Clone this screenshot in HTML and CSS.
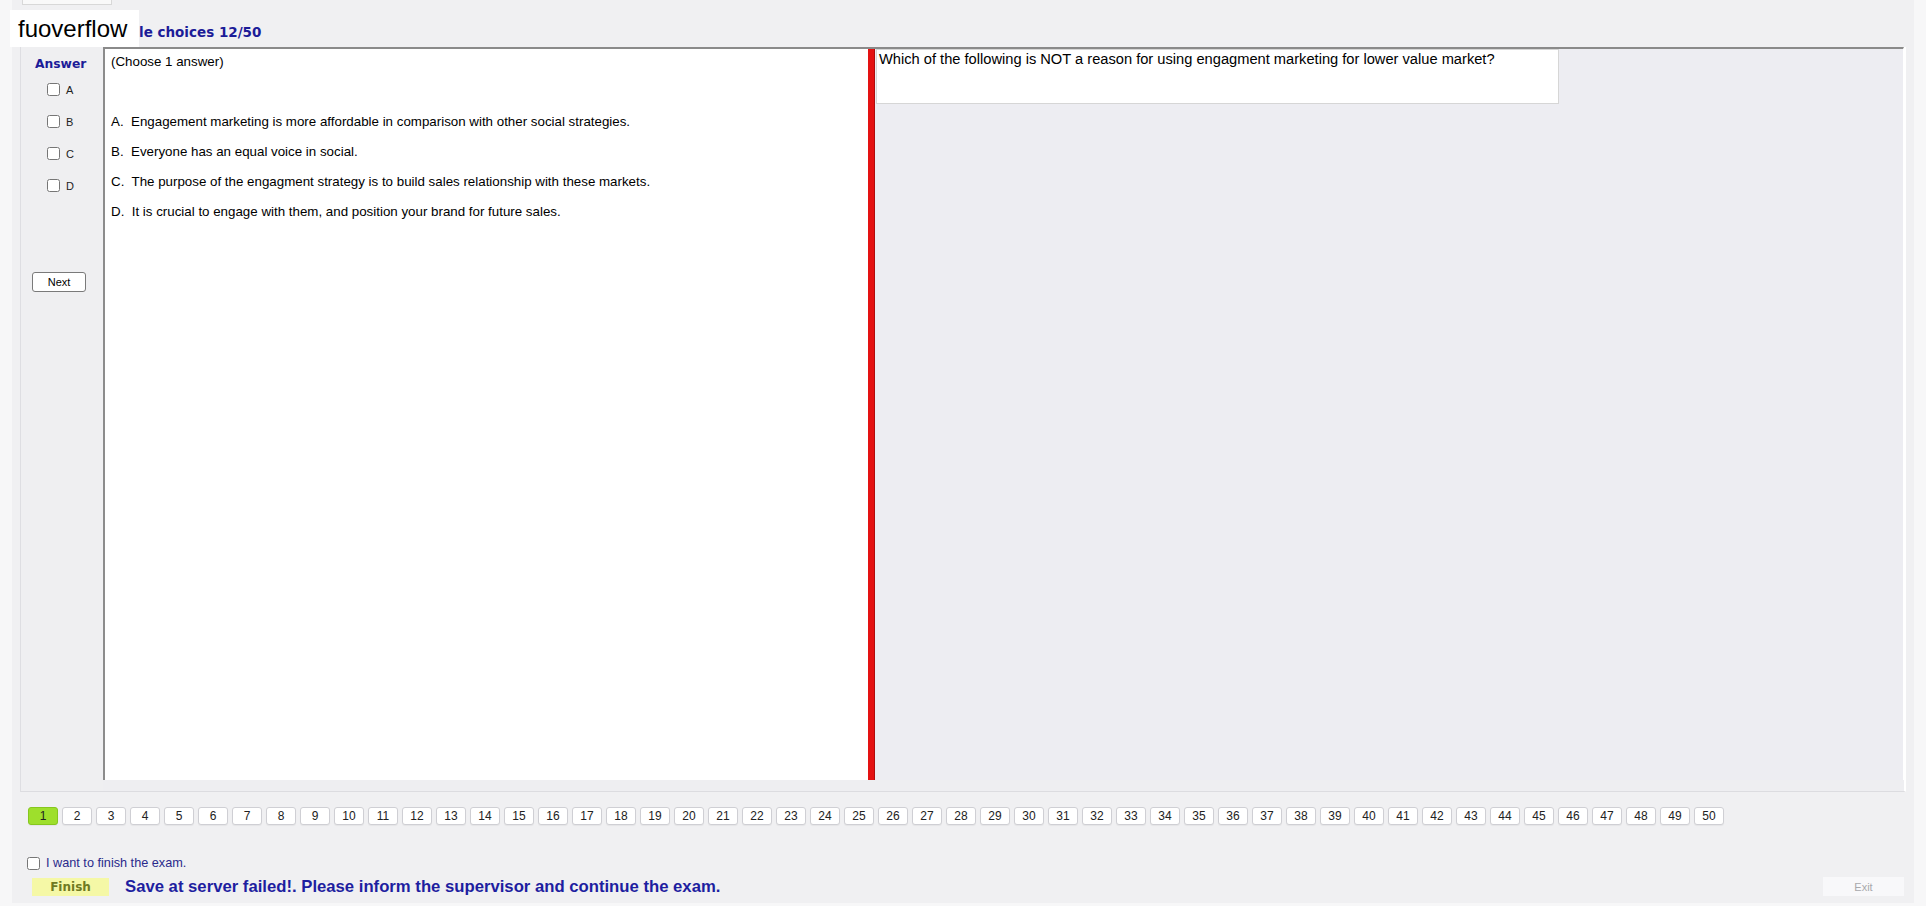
FILE: index.html
```html
<!DOCTYPE html>
<html>
<head>
    <title>Exam Client</title>
    <link rel="stylesheet" href="styles.css">
</head>
<body>
    <div class="window">
        <div class="tabs"><span class="tab"></span></div>
        <div class="title">le choices 12/50</div>

        <div class="group">
            <div class="answer-col">
                <div class="answer-label">Answer</div>
                <label class="opt"><input type="checkbox"> A</label>
                <label class="opt"><input type="checkbox"> B</label>
                <label class="opt"><input type="checkbox"> C</label>
                <label class="opt"><input type="checkbox"> D</label>
                <button class="next-btn">Next</button>
            </div>
            <div class="work">
                <div class="panes">
                    <div class="choices">
                        <p>(Choose 1 answer)</p>
                        <p>&nbsp;</p>
                        <p>A.&nbsp; Engagement marketing is more affordable in comparison with other social strategies.</p>
                        <p>B.&nbsp; Everyone has an equal voice in social.</p>
                        <p>C.&nbsp; The purpose of the engagment strategy is to build sales relationship with these markets.</p>
                        <p>D.&nbsp; It is crucial to engage with them, and position your brand for future sales.</p>
                    </div>
                    <div class="splitter"></div>
                    <div class="qpane">
                        <div class="question">Which of the following is NOT a reason for using engagment marketing for lower value market?</div>
                    </div>
                </div>
            </div>
        </div>

        <div class="pager" id="pager"></div>

        <label class="finish-check"><input type="checkbox"> I want to finish the exam.</label>
        <div class="finish-row">
            <button class="finish-btn">Finish</button>
            <span class="status">Save at server failed!. Please inform the supervisor and continue the exam.</span>
            <button class="exit-btn">Exit</button>
        </div>
    </div>

    <div class="watermark">fuoverflow</div>

    <script>
        // question number buttons
        const pager = document.getElementById("pager");
        for (let i = 1; i <= 50; i++) {
            const b = document.createElement("button");
            b.className = (i === 1) ? "qbtn current" : "qbtn";
            b.textContent = i;
            pager.appendChild(b);
        }
    </script>
</body>
</html>
```

FILE: styles.css
```css
body {
    margin: 0;
    padding: 0;
    background-color: #f7f7f8;
    font-family: "Liberation Sans", Arial, sans-serif;
    font-size: 12px;
    color: #000;
}

.window {
    margin-left: 12px;
    width: 1902px;
    height: 903px;
    padding-left: 8px;
    box-sizing: border-box;
    background-color: #f0f0f2;
}

.tabs {
    height: 5px;
}

.tab {
    display: block;
    margin-left: 2px;
    width: 88px;
    height: 4px;
    background-color: #f9f9f9;
    border: 1px solid #d8d8d8;
    border-top: none;
}

.title {
    height: 42px;
    box-sizing: border-box;
    padding: 19px 0 0 119px;
    font-family: "DejaVu Sans", Verdana, sans-serif;
    font-weight: bold;
    font-size: 13.5px;
    color: #1c1c98;
}

.group {
    display: flex;
    width: 1886px;
    height: 745px;
    box-sizing: border-box;
    border-left: 1px solid #dedee2;
    border-right: 2px solid #ffffff;
    border-bottom: 1px solid #dcdce0;
    background-color: #eeeef1;
}

.answer-col {
    width: 82px;
    display: flex;
    flex-direction: column;
    align-items: flex-start;
    background-color: #efeff1;
}

.answer-label {
    margin: 10px 0 0 14px;
    font-family: "DejaVu Sans", Verdana, sans-serif;
    font-weight: bold;
    font-size: 12.3px;
    color: #1c1c98;
}

.opt {
    display: flex;
    align-items: center;
    height: 13px;
    margin: 12px 0 0 26px;
    font-size: 11px;
    color: #222;
}

.opt + .opt {
    margin-top: 19px;
}

.opt input,
.finish-check input {
    width: 13px;
    height: 13px;
    margin: 0 6px 0 0;
}

.next-btn {
    margin: 80px 0 0 11px;
    width: 54px;
    height: 20px;
    padding: 0;
    font-family: "Liberation Sans", Arial, sans-serif;
    font-size: 11px;
    background-color: #fff;
    border: 1px solid #7a7a7a;
    border-radius: 3px;
}

.work {
    flex: 1;
    padding-bottom: 13px;
}

.panes {
    display: flex;
    height: 731px;
    border-top: 2px solid #8a8a8a;
    border-right: 1px solid #ffffff;
}

.choices {
    width: 765px;
    box-sizing: border-box;
    border-left: 2px solid #8c8c8c;
    background-color: #fff;
    padding: 0 6px;
    font-size: 13.33px;
}

.choices p {
    margin: 0;
    line-height: 30px;
    white-space: nowrap;
}

.choices p:first-child {
    margin-top: -2px;
}

.splitter {
    width: 6px;
    background-color: #e41212;
    border-right: 1px solid #b00c0c;
}

.qpane {
    flex: 1;
    background-color: #ededf2;
    padding-left: 1px;
}

.question {
    width: 683px;
    height: 55px;
    box-sizing: border-box;
    padding: 1px 2px;
    background-color: #fff;
    border: 1px solid #d6d6d6;
    font-size: 14.67px;
}

.pager {
    display: flex;
    gap: 4px;
    margin: 15px 0 0 8px;
    height: 18px;
}

.qbtn {
    width: 30px;
    height: 18px;
    padding: 0;
    font-family: "Liberation Sans", Arial, sans-serif;
    font-size: 12px;
    color: #222;
    background-color: #fff;
    border: 1px solid #cfcfd4;
    border-radius: 3px;
    box-shadow: 0 1px 1px rgba(0, 0, 0, 0.05);
}

.qbtn.current {
    background-color: #9edf2c;
    border-color: #86c71e;
}

.finish-check {
    display: flex;
    align-items: center;
    margin: 32px 0 0 7px;
    height: 12px;
    font-size: 12.7px;
    color: #2a2a8c;
}

.finish-row {
    display: flex;
    align-items: center;
    margin-top: 8px;
    height: 19px;
}

.finish-btn {
    margin-left: 12px;
    width: 77px;
    height: 18px;
    padding: 0;
    border: none;
    background-color: #f5f8a6;
    font-family: "DejaVu Sans", Verdana, sans-serif;
    font-weight: bold;
    font-size: 12px;
    color: #6f7a22;
}

.status {
    margin-left: 16px;
    font-weight: bold;
    font-size: 16.7px;
    color: #1e1ea0;
}

.exit-btn {
    margin-left: auto;
    margin-right: 10px;
    width: 81px;
    height: 19px;
    padding: 0;
    border: none;
    background-color: #f8f8fa;
    font-family: "Liberation Sans", Arial, sans-serif;
    font-size: 11px;
    color: #a8a8ac;
}

.watermark {
    position: absolute;
    top: 10px;
    left: 10px;
    width: 129px;
    height: 37px;
    box-sizing: border-box;
    padding: 5px 0 0 8px;
    background-color: #fff;
    font-family: "Liberation Sans", Arial, sans-serif;
    font-size: 24px;
    color: #000;
}
```
